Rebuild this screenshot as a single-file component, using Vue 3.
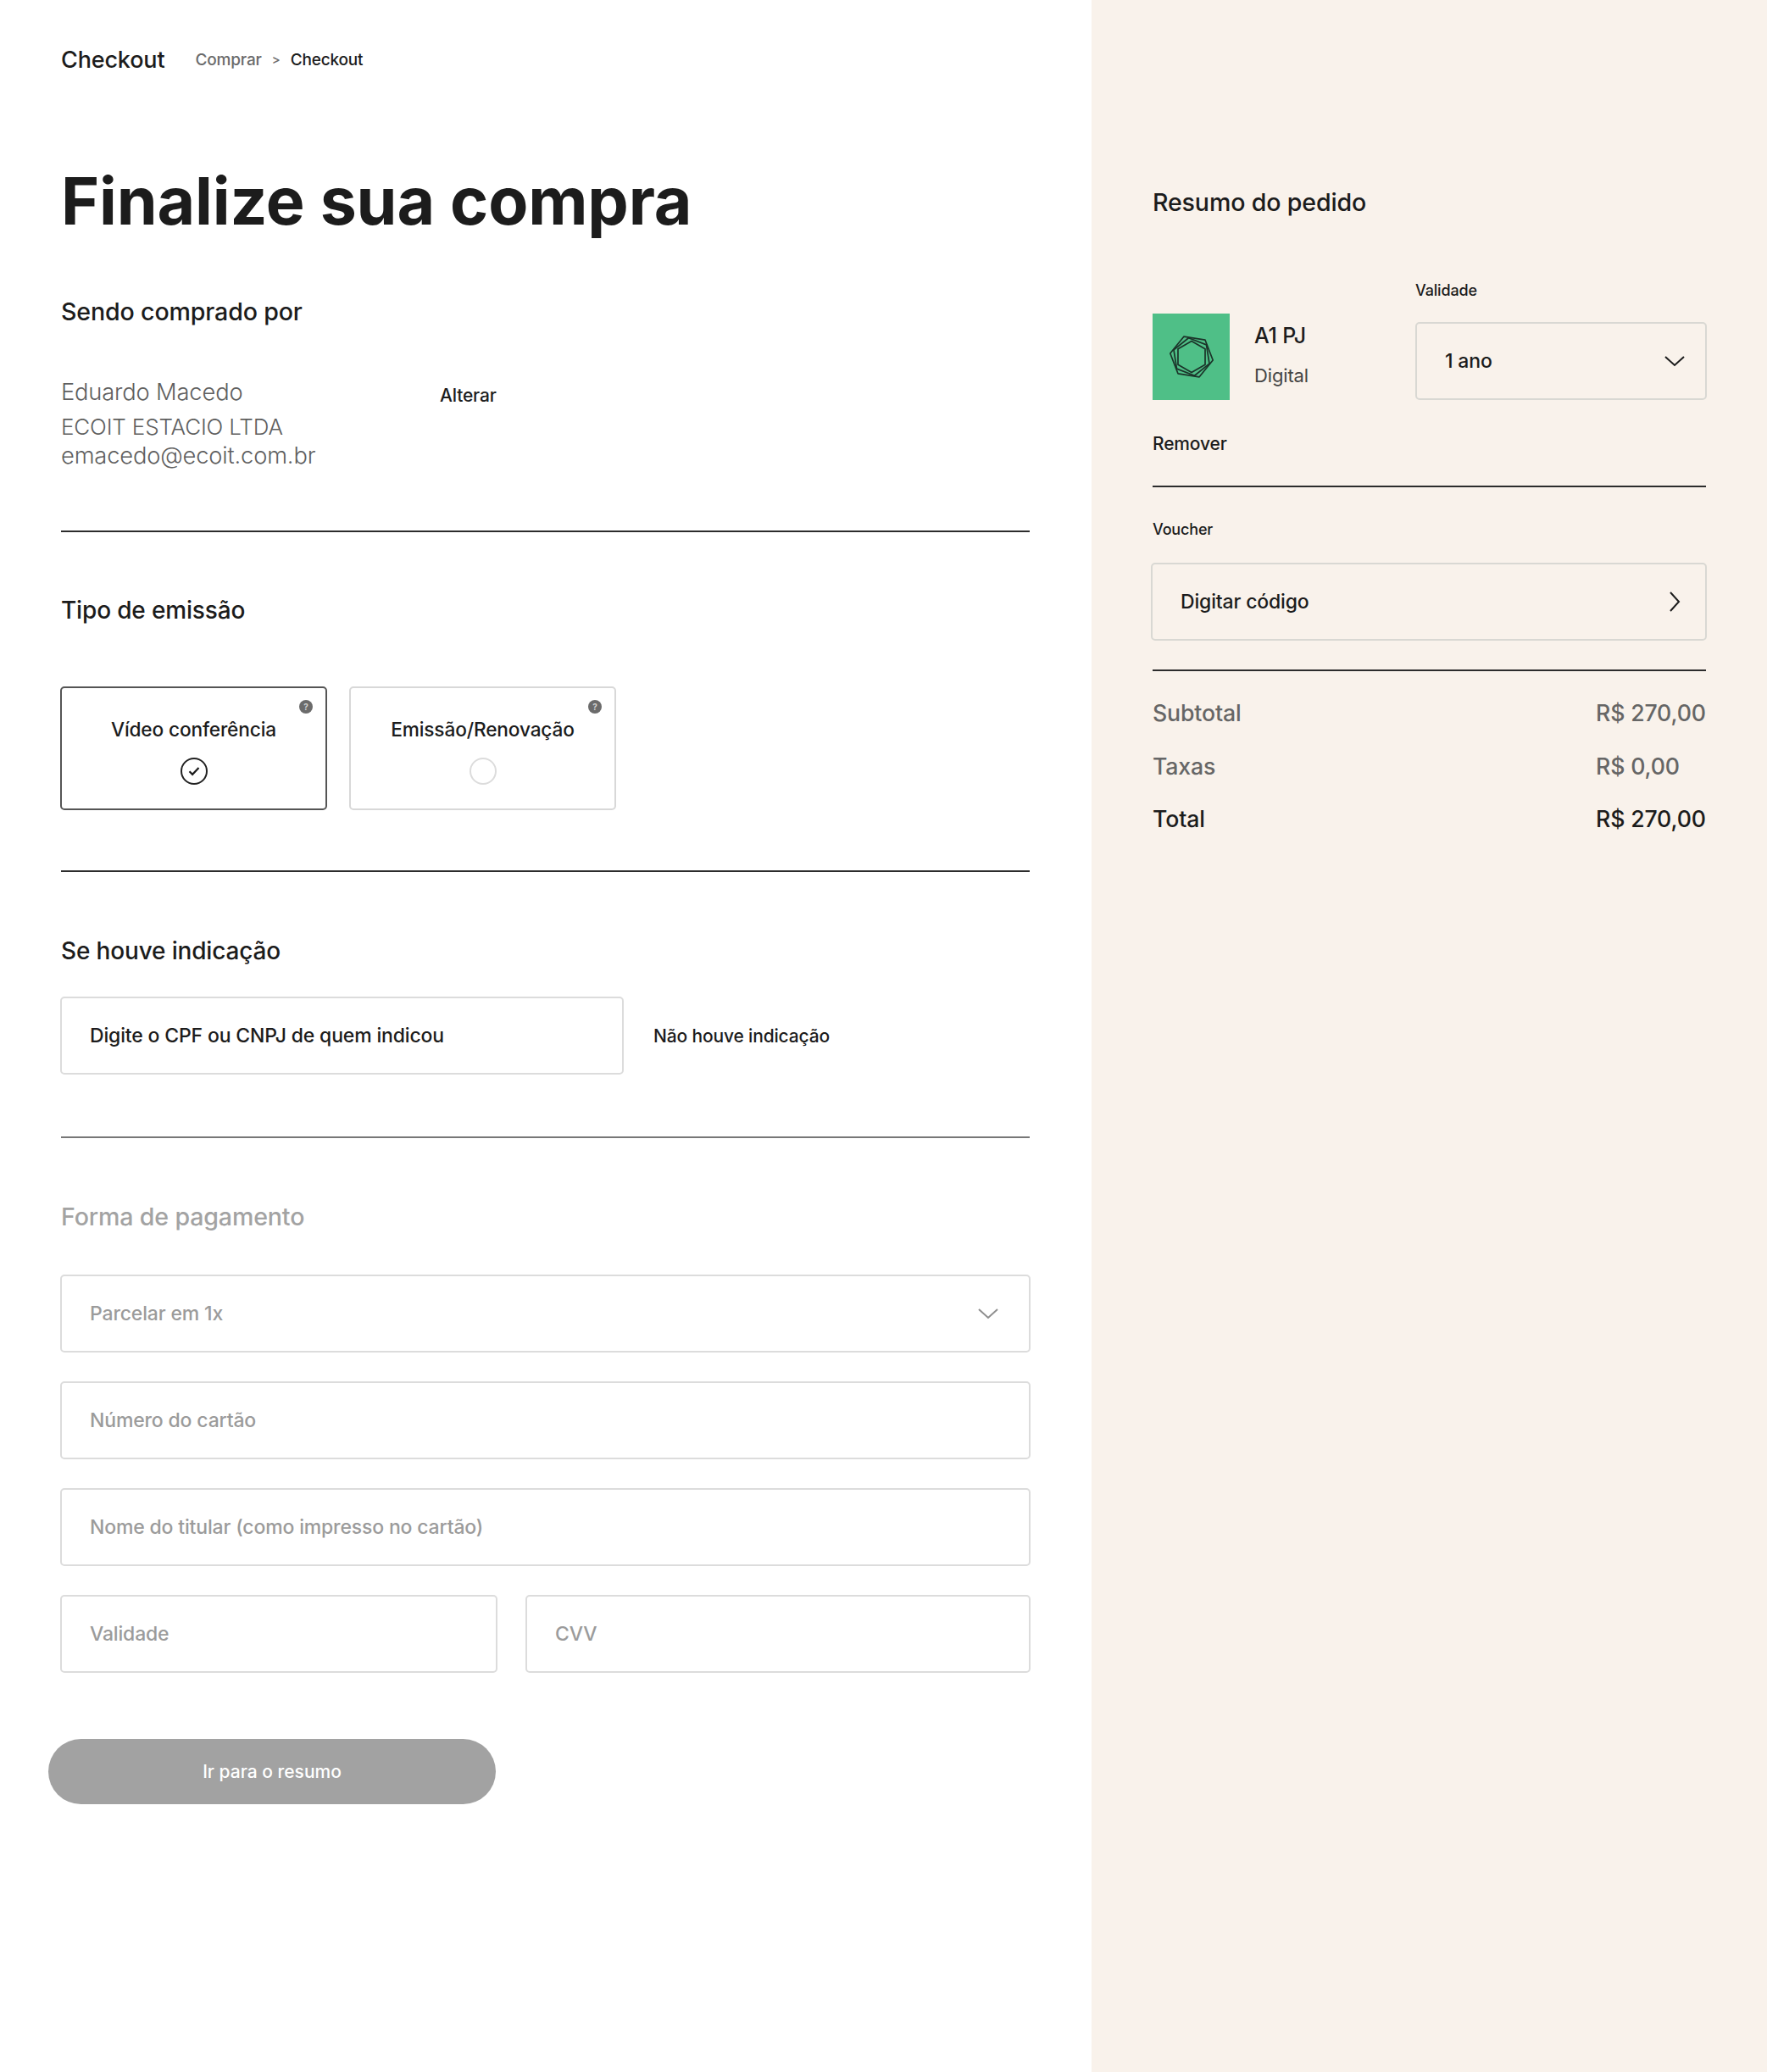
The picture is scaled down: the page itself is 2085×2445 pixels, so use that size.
<template>
  <div class="page">
    <main class="main">
      <header class="top">
        <span class="top-title">Checkout</span>
        <nav class="crumbs">
          <span class="crumb-muted">Comprar</span>
          <span class="crumb-sep">&gt;</span>
          <span>Checkout</span>
        </nav>
      </header>

      <h1 class="headline">Finalize sua compra</h1>

      <h2 class="section-title buyer-title">Sendo comprado por</h2>
      <div class="buyer">
        <div class="buyer-info">
          <div class="buyer-name">Eduardo Macedo</div>
          <div class="buyer-company">ECOIT ESTACIO LTDA</div>
          <div>emacedo@ecoit.com.br</div>
        </div>
        <a class="link alterar">Alterar</a>
      </div>
      <hr class="rule buyer-rule" />

      <h2 class="section-title emission-title">Tipo de emissão</h2>
      <div class="emission">
        <div
          v-for="opt in emissionTypes"
          :key="opt.label"
          class="emission-card"
          :class="{ active: opt.active }"
        >
          <span class="help">?</span>
          <span class="emission-label">{{ opt.label }}</span>
          <span class="radio">
            <svg v-if="opt.active" width="16" height="14" viewBox="0 0 16 14">
              <path d="M2.5 7.2l3.6 3.6L13.5 3" fill="none" stroke="#1c1c1c" stroke-width="2.2" />
            </svg>
          </span>
        </div>
      </div>
      <hr class="rule emission-rule" />

      <h2 class="section-title referral-title">Se houve indicação</h2>
      <div class="referral">
        <div class="field referral-field">Digite o CPF ou CNPJ de quem indicou</div>
        <a class="link">Não houve indicação</a>
      </div>
      <hr class="rule referral-rule" />

      <h2 class="section-title payment-title">Forma de pagamento</h2>
      <div class="payment">
        <div class="field muted spread select-pad">
          Parcelar em 1x
          <svg width="24" height="14" viewBox="0 0 24 14">
            <path d="M1 2l11 10L23 2" fill="none" stroke="#8f8f8f" stroke-width="2" />
          </svg>
        </div>
        <div class="field muted">Número do cartão</div>
        <div class="field muted">Nome do titular (como impresso no cartão)</div>
        <div class="card-row">
          <div class="field muted">Validade</div>
          <div class="field muted">CVV</div>
        </div>
      </div>
      <button class="submit">Ir para o resumo</button>
    </main>

    <aside class="summary">
      <h2 class="section-title summary-title">Resumo do pedido</h2>
      <div class="product">
        <div class="thumb">
          <svg width="60" height="60" viewBox="0 0 60 60">
            <g fill="none" stroke="#1b3329" stroke-width="1.7" stroke-linejoin="round">
              <polygon v-for="h in logoHexes" :key="h.turn" :points="hexPoints(h.radius, h.turn)" />
            </g>
          </svg>
        </div>
        <div class="product-info">
          <div class="product-name">A1 PJ</div>
          <div class="product-kind">Digital</div>
        </div>
        <div class="validity">
          <div class="small-label">Validade</div>
          <div class="field spread on-cream">
            1 ano
            <svg width="24" height="14" viewBox="0 0 24 14">
              <path d="M1 2l11 10L23 2" fill="none" stroke="#1c1c1c" stroke-width="2" />
            </svg>
          </div>
        </div>
      </div>
      <a class="link remove">Remover</a>
      <hr class="rule remove-rule" />

      <div class="small-label voucher-label">Voucher</div>
      <div class="field spread on-cream voucher-field">
        Digitar código
        <svg width="14" height="24" viewBox="0 0 14 24">
          <path d="M2 1l10 11L2 23" fill="none" stroke="#1c1c1c" stroke-width="2" />
        </svg>
      </div>
      <hr class="rule voucher-rule" />

      <div class="totals">
        <div
          v-for="row in totals"
          :key="row.label"
          class="total-row"
          :class="{ strong: row.strong }"
        >
          <span>{{ row.label }}</span>
          <span class="total-value">{{ row.value }}</span>
        </div>
      </div>
    </aside>
  </div>
</template>

<script setup>
const emissionTypes = [
  { label: "Vídeo conferência", active: true },
  { label: "Emissão/Renovação", active: false },
];

const totals = [
  { label: "Subtotal", value: "R$ 270,00" },
  { label: "Taxas", value: "R$ 0,00" },
  { label: "Total", value: "R$ 270,00", strong: true },
];

// o logo sao tres hexagonos girados, de tamanhos diferentes
const logoHexes = [
  { radius: 25.5, turn: -21 },
  { radius: 22.5, turn: -9 },
  { radius: 18.5, turn: 0 },
];

function hexPoints(radius, turn) {
  return [0, 1, 2, 3, 4, 5]
    .map((i) => {
      const a = ((60 * i - 90 + turn) * Math.PI) / 180;
      return (30 + radius * Math.cos(a)).toFixed(2) + "," + (30 + radius * Math.sin(a)).toFixed(2);
    })
    .join(" ");
}
</script>

<style>
html,
body {
  margin: 0;
  background: #fff;
}
</style>

<style scoped>
.page {
  display: flex;
  width: 2085px;
  min-height: 2445px;
  font-family: Inter, "Liberation Sans", sans-serif;
  color: #1c1c1c;
  letter-spacing: -0.01em;
}

.main {
  box-sizing: border-box;
  width: 1288px;
  padding: 0 73px 0 72px;
}

.summary {
  box-sizing: border-box;
  width: 797px;
  padding: 0 72px;
  background: #f9f2eb;
}

.top {
  display: flex;
  align-items: center;
  gap: 36px;
  height: 34px;
  padding-top: 53px;
}

.top-title {
  font-size: 27px;
  font-weight: 500;
}

.crumbs {
  display: flex;
  align-items: center;
  gap: 12px;
  font-size: 19px;
  font-weight: 500;
}

.crumb-muted,
.crumb-sep {
  color: #6b6b6b;
}

.crumb-sep {
  font-size: 15px;
}

.headline {
  margin: 100px 0 0;
  font-size: 77px;
  line-height: 100px;
  font-weight: 700;
}

.section-title {
  margin: 0;
  font-size: 28.6px;
  line-height: 36px;
  font-weight: 500;
}

.buyer-title {
  margin-top: 63px;
}

.buyer {
  display: flex;
  margin-top: 60px;
}

.buyer-info {
  width: 447px;
  font-size: 27.3px;
  line-height: 34px;
  font-weight: 300;
  color: #5f5f5f;
}

.buyer-name {
  margin-bottom: 7px;
}

.buyer-company {
  font-size: 26px;
}

.alterar {
  margin-top: 8px;
}

.link {
  font-size: 21px;
  font-weight: 500;
  color: #1c1c1c;
}

.rule {
  height: 2px;
  margin: 0;
  border: 0;
  background: #2c2c2c;
}

.buyer-rule {
  margin-top: 71px;
}

.emission-title {
  margin-top: 74px;
  font-size: 28px;
}

.emission {
  display: flex;
  gap: 26px;
  margin: 72px 0 0 -1px;
}

.emission-card {
  position: relative;
  box-sizing: border-box;
  display: flex;
  flex-direction: column;
  align-items: center;
  width: 315px;
  height: 146px;
  padding-top: 34px;
  border: 2px solid #d8d8d8;
  border-radius: 5px;
}

.emission-card.active {
  border-color: #555;
}

.emission-label {
  font-size: 22.7px;
  line-height: 30px;
  font-weight: 500;
}

.radio {
  display: flex;
  align-items: center;
  justify-content: center;
  box-sizing: border-box;
  width: 32px;
  height: 32px;
  margin-top: 18px;
  border: 2px solid #dcdcdc;
  border-radius: 50%;
}

.active .radio {
  border-color: #222;
}

.help {
  position: absolute;
  top: 14px;
  right: 15px;
  width: 16px;
  height: 16px;
  border-radius: 50%;
  background: #6b6b6b;
  color: #cfcfcf;
  font-size: 10px;
  line-height: 16px;
  font-weight: 700;
  text-align: center;
}

.emission-rule {
  margin-top: 71px;
}

.referral-title {
  margin-top: 75px;
  font-size: 28px;
}

.referral {
  display: flex;
  align-items: center;
  gap: 35px;
  margin: 36px 0 0 -1px;
}

.referral-field {
  width: 665px;
}

.referral-rule {
  margin-top: 73px;
  background: #777;
}

.payment-title {
  margin-top: 75px;
  color: #a3a3a3;
}

.payment {
  display: flex;
  flex-direction: column;
  gap: 34px;
  margin: 50px -1px 0;
}

.field {
  display: flex;
  align-items: center;
  box-sizing: border-box;
  height: 92px;
  padding: 0 24px 0 33px;
  border: 2px solid #dcdcdc;
  border-radius: 5px;
  font-size: 23px;
  font-weight: 500;
}

.field.muted {
  color: #9b9b9b;
}

.field.on-cream {
  border-color: #d9d8d3;
}

.select-pad {
  padding-right: 36px;
}

.spread {
  justify-content: space-between;
}

.card-row {
  display: grid;
  grid-template-columns: 516px 1fr;
  gap: 33px;
}

.submit {
  display: block;
  width: 528px;
  height: 77px;
  margin: 78px 0 0 -15px;
  border: 0;
  border-radius: 39px;
  background: #a2a2a2;
  color: #fff;
  font-family: inherit;
  font-size: 21px;
  font-weight: 500;
}

.summary-title {
  margin-top: 221px;
}

.product {
  display: flex;
  align-items: flex-start;
  margin-top: 109px;
}

.thumb {
  display: flex;
  align-items: center;
  justify-content: center;
  flex: none;
  width: 91px;
  height: 102px;
  margin-top: 4px;
  background: #4fbf87;
}

.product-info {
  width: 219px;
  padding: 14px 0 0 29px;
  box-sizing: border-box;
}

.product-name {
  font-size: 25px;
  line-height: 32px;
  font-weight: 500;
}

.product-kind {
  margin-top: 17px;
  font-size: 22px;
  line-height: 28px;
  color: #444;
}

.validity {
  flex: 1;
  margin: -35px -1px 0 0;
}

.small-label {
  font-size: 18px;
  line-height: 24px;
  font-weight: 500;
}

.validity .small-label {
  margin-bottom: 25px;
}

.remove {
  display: block;
  margin-top: 38px;
  line-height: 28px;
}

.remove-rule {
  margin-top: 35px;
}

.voucher-label {
  margin-top: 38px;
  margin-bottom: 27px;
}

.voucher-field {
  margin: 0 -1px 0 -2px;
  padding-right: 29px;
}

.voucher-rule {
  margin-top: 34px;
}

.totals {
  margin-top: 31px;
}

.total-row {
  display: flex;
  justify-content: space-between;
  height: 62.5px;
  font-size: 26.7px;
  line-height: 36px;
  font-weight: 500;
  color: #666;
}

.total-value {
  flex: 0 0 130px;
  white-space: nowrap;
}

.total-row.strong {
  color: #1c1c1c;
}
</style>
